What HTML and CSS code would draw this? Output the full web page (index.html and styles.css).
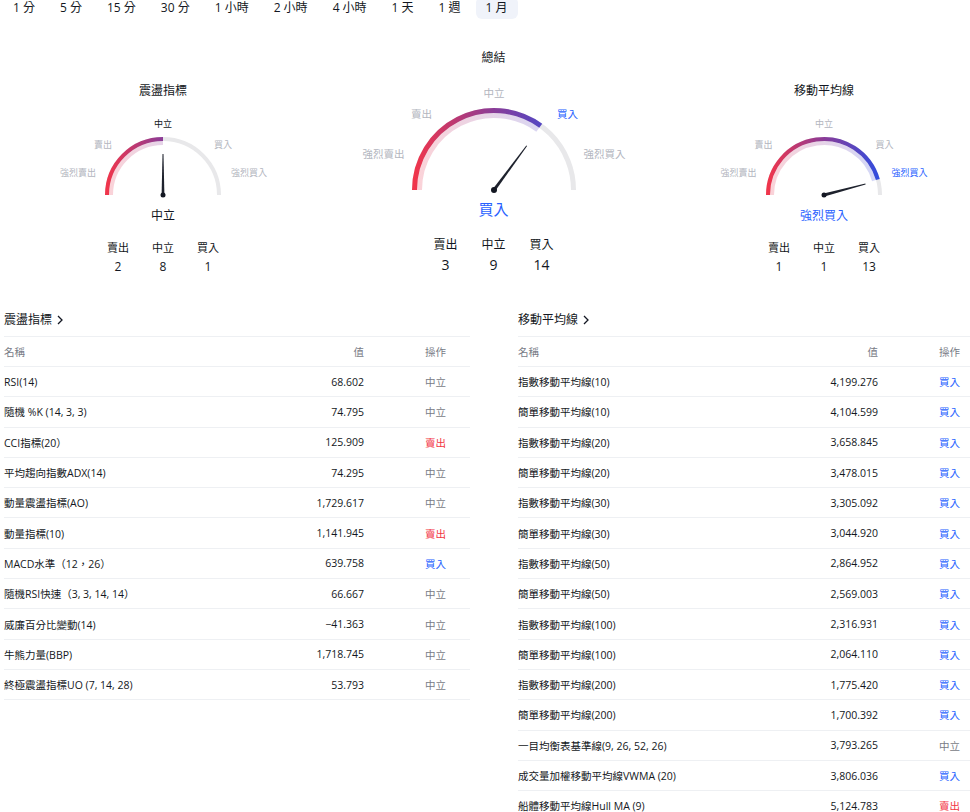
FILE: index.html
```html
<!DOCTYPE html>
<html lang="zh-Hant">
<head>
<meta charset="utf-8">
<title>技術分析</title>
<link rel="stylesheet" href="styles.css">
</head>
<body>
<div class="tabs">
  <button class="tab">1 分</button>
  <button class="tab">5 分</button>
  <button class="tab">15 分</button>
  <button class="tab">30 分</button>
  <button class="tab">1 小時</button>
  <button class="tab">2 小時</button>
  <button class="tab">4 小時</button>
  <button class="tab">1 天</button>
  <button class="tab">1 週</button>
  <button class="tab active">1 月</button>
</div>

<div class="gauges">
  <div class="gauge">
    <div class="g-title">震盪指標</div>
    <svg class="dial" width="326" height="100" viewBox="0 0 326 100">
      <defs>
        <linearGradient id="gl" gradientUnits="userSpaceOnUse" x1="107" y1="0" x2="219" y2="0">
          <stop offset="0" stop-color="#f0354b"/>
          <stop offset="0.5" stop-color="#8a3c98"/>
          <stop offset="1" stop-color="#2f4de0"/>
        </linearGradient>
      </defs>
      <text class="sl on" x="163" y="24">中立</text>
      <text class="sl" x="103" y="45">賣出</text>
      <text class="sl" x="78" y="73">強烈賣出</text>
      <text class="sl" x="223" y="45">買入</text>
      <text class="sl" x="249" y="73">強烈買入</text>
      <path d="M107 96 A56 56 0 0 1 219 96" class="track" stroke-width="4"/>
      <path d="M107 96 A56 56 0 0 1 163 40" fill="none" stroke="url(#gl)" stroke-width="4"/>
      <path d="M111 96 A52 52 0 0 1 163 44" fill="none" stroke="url(#gl)" stroke-width="4" opacity="0.22"/>
      <polygon class="needle" points="161.6,96 164.4,96 163.5,55 162.5,55"/>
      <circle class="pivot" cx="163" cy="96" r="2.5"/>
    </svg>
    <div class="g-value">中立</div>
    <div class="counts">
      <div class="cnt"><span class="cl">賣出</span><span class="cn">2</span></div>
      <div class="cnt"><span class="cl">中立</span><span class="cn">8</span></div>
      <div class="cnt"><span class="cl">買入</span><span class="cn">1</span></div>
    </div>
  </div>

  <div class="gauge main">
    <div class="g-title">總結</div>
    <svg class="dial" width="326" height="128" viewBox="0 0 326 128">
      <defs>
        <linearGradient id="gm" gradientUnits="userSpaceOnUse" x1="83.5" y1="0" x2="242.5" y2="0">
          <stop offset="0" stop-color="#f0354b"/>
          <stop offset="0.5" stop-color="#8a3c98"/>
          <stop offset="1" stop-color="#2f4de0"/>
        </linearGradient>
      </defs>
      <text class="ml" x="163" y="26">中立</text>
      <text class="ml" x="90.5" y="47">賣出</text>
      <text class="ml" x="52.5" y="87">強烈賣出</text>
      <text class="ml buy" x="236.5" y="47">買入</text>
      <text class="ml" x="273.5" y="87">強烈買入</text>
      <path d="M83.5 124 A79.5 79.5 0 0 1 242.5 124" class="track" stroke-width="5"/>
      <path d="M83.5 124 A79.5 79.5 0 0 1 209.73 59.68" fill="none" stroke="url(#gm)" stroke-width="5"/>
      <path d="M88.5 124 A74.5 74.5 0 0 1 206.79 63.73" fill="none" stroke="url(#gm)" stroke-width="5" opacity="0.22"/>
      <polygon class="needle" points="161.8,123.1 164.2,124.9 196.1,80.1 195.3,79.5"/>
      <circle class="pivot" cx="163" cy="124" r="3"/>
    </svg>
    <div class="g-value buy">買入</div>
    <div class="counts">
      <div class="cnt"><span class="cl">賣出</span><span class="cn">3</span></div>
      <div class="cnt"><span class="cl">中立</span><span class="cn">9</span></div>
      <div class="cnt"><span class="cl">買入</span><span class="cn">14</span></div>
    </div>
  </div>

  <div class="gauge">
    <div class="g-title">移動平均線</div>
    <svg class="dial" width="326" height="100" viewBox="0 0 326 100">
      <defs>
        <linearGradient id="gr" gradientUnits="userSpaceOnUse" x1="107" y1="0" x2="219" y2="0">
          <stop offset="0" stop-color="#f0354b"/>
          <stop offset="0.5" stop-color="#8a3c98"/>
          <stop offset="1" stop-color="#2f4de0"/>
        </linearGradient>
      </defs>
      <text class="sl" x="163" y="24">中立</text>
      <text class="sl" x="102.5" y="45">賣出</text>
      <text class="sl" x="77.5" y="73">強烈賣出</text>
      <text class="sl" x="223.5" y="45">買入</text>
      <text class="sl buy" x="248.5" y="73">強烈買入</text>
      <path d="M107 96 A56 56 0 0 1 219 96" class="track" stroke-width="4"/>
      <path d="M107 96 A56 56 0 0 1 216.83 80.57" fill="none" stroke="url(#gr)" stroke-width="4"/>
      <path d="M111 96 A52 52 0 0 1 212.99 81.67" fill="none" stroke="url(#gr)" stroke-width="4" opacity="0.22"/>
      <polygon class="needle" points="162.6,94.6 163.4,97.4 204.6,85.6 204.4,84.4"/>
      <circle class="pivot" cx="163" cy="96" r="2.5"/>
    </svg>
    <div class="g-value buy">強烈買入</div>
    <div class="counts">
      <div class="cnt"><span class="cl">賣出</span><span class="cn">1</span></div>
      <div class="cnt"><span class="cl">中立</span><span class="cn">1</span></div>
      <div class="cnt"><span class="cl">買入</span><span class="cn">13</span></div>
    </div>
  </div>
</div>

<div class="tables">
  <section class="tbl">
    <h2 class="tbl-title">震盪指標 <svg class="chev" width="6" height="10" viewBox="0 0 6 10"><path d="M1 1 L5 5 L1 9" fill="none" stroke="#131722" stroke-width="1.3"/></svg></h2>
    <div class="row head"><span class="c-name">名稱</span><span class="c-val">值</span><span class="c-act">操作</span></div>
    <div class="row"><span class="c-name">RSI(14)</span><span class="c-val">68.602</span><span class="c-act neu">中立</span></div>
    <div class="row"><span class="c-name">隨機 %K (14, 3, 3)</span><span class="c-val">74.795</span><span class="c-act neu">中立</span></div>
    <div class="row"><span class="c-name">CCI指標(20）</span><span class="c-val">125.909</span><span class="c-act sell">賣出</span></div>
    <div class="row"><span class="c-name">平均趨向指數ADX(14)</span><span class="c-val">74.295</span><span class="c-act neu">中立</span></div>
    <div class="row"><span class="c-name">動量震盪指標(AO)</span><span class="c-val">1,729.617</span><span class="c-act neu">中立</span></div>
    <div class="row"><span class="c-name">動量指標(10)</span><span class="c-val">1,141.945</span><span class="c-act sell">賣出</span></div>
    <div class="row"><span class="c-name">MACD水準（12，26）</span><span class="c-val">639.758</span><span class="c-act buy">買入</span></div>
    <div class="row"><span class="c-name">隨機RSI快速（3, 3, 14, 14）</span><span class="c-val">66.667</span><span class="c-act neu">中立</span></div>
    <div class="row"><span class="c-name">威廉百分比變動(14)</span><span class="c-val">−41.363</span><span class="c-act neu">中立</span></div>
    <div class="row"><span class="c-name">牛熊力量(BBP)</span><span class="c-val">1,718.745</span><span class="c-act neu">中立</span></div>
    <div class="row"><span class="c-name">終極震盪指標UO (7, 14, 28)</span><span class="c-val">53.793</span><span class="c-act neu">中立</span></div>
  </section>

  <section class="tbl">
    <h2 class="tbl-title">移動平均線 <svg class="chev" width="6" height="10" viewBox="0 0 6 10"><path d="M1 1 L5 5 L1 9" fill="none" stroke="#131722" stroke-width="1.3"/></svg></h2>
    <div class="row head"><span class="c-name">名稱</span><span class="c-val">值</span><span class="c-act">操作</span></div>
    <div class="row"><span class="c-name">指數移動平均線(10)</span><span class="c-val">4,199.276</span><span class="c-act buy">買入</span></div>
    <div class="row"><span class="c-name">簡單移動平均線(10)</span><span class="c-val">4,104.599</span><span class="c-act buy">買入</span></div>
    <div class="row"><span class="c-name">指數移動平均線(20)</span><span class="c-val">3,658.845</span><span class="c-act buy">買入</span></div>
    <div class="row"><span class="c-name">簡單移動平均線(20)</span><span class="c-val">3,478.015</span><span class="c-act buy">買入</span></div>
    <div class="row"><span class="c-name">指數移動平均線(30)</span><span class="c-val">3,305.092</span><span class="c-act buy">買入</span></div>
    <div class="row"><span class="c-name">簡單移動平均線(30)</span><span class="c-val">3,044.920</span><span class="c-act buy">買入</span></div>
    <div class="row"><span class="c-name">指數移動平均線(50)</span><span class="c-val">2,864.952</span><span class="c-act buy">買入</span></div>
    <div class="row"><span class="c-name">簡單移動平均線(50)</span><span class="c-val">2,569.003</span><span class="c-act buy">買入</span></div>
    <div class="row"><span class="c-name">指數移動平均線(100)</span><span class="c-val">2,316.931</span><span class="c-act buy">買入</span></div>
    <div class="row"><span class="c-name">簡單移動平均線(100)</span><span class="c-val">2,064.110</span><span class="c-act buy">買入</span></div>
    <div class="row"><span class="c-name">指數移動平均線(200)</span><span class="c-val">1,775.420</span><span class="c-act buy">買入</span></div>
    <div class="row"><span class="c-name">簡單移動平均線(200)</span><span class="c-val">1,700.392</span><span class="c-act buy">買入</span></div>
    <div class="row"><span class="c-name">一目均衡表基準線(9, 26, 52, 26)</span><span class="c-val">3,793.265</span><span class="c-act neu">中立</span></div>
    <div class="row"><span class="c-name">成交量加權移動平均線VWMA (20)</span><span class="c-val">3,806.036</span><span class="c-act buy">買入</span></div>
    <div class="row"><span class="c-name">船體移動平均線Hull MA (9)</span><span class="c-val">5,124.783</span><span class="c-act sell">賣出</span></div>
  </section>
</div>
</body>
</html>
```

FILE: styles.css
```css
html, body {
  margin: 0;
  padding: 0;
  overflow: hidden;
  background: #ffffff;
}

body {
  width: 988px;
  font-family: "Open Sans", "Noto Sans CJK TC", sans-serif;
  color: #131722;
}

/* interval tabs */
.tabs {
  display: flex;
  gap: 5px;
  padding-left: 3px;
  margin-top: -3px;
}

.tab {
  font-family: inherit;
  font-size: 12px;
  height: 22px;
  line-height: 22px;
  padding: 0 10px;
  border: 0;
  border-radius: 6px;
  background: transparent;
  color: #131722;
}

.tab.active {
  background: #f0f3fa;
}

/* gauges */
.gauges {
  display: flex;
  justify-content: space-between;
  width: 987px;
}

.gauge {
  width: 326px;
  display: flex;
  flex-direction: column;
  align-items: center;
  padding-top: 64px;
}

.gauge.main {
  padding-top: 31px;
}

.g-title {
  font-size: 12px;
  line-height: 16px;
}

.dial {
  display: block;
}

.dial text {
  font-family: "Noto Sans CJK TC", sans-serif;
  text-anchor: middle;
  dominant-baseline: central;
}

.sl {
  font-size: 9px;
  fill: #b2b5be;
}

.ml {
  font-size: 10.5px;
  fill: #b2b5be;
}

.sl.on {
  fill: #131722;
}

.sl.buy, .ml.buy {
  fill: #2962ff;
}

.track {
  fill: none;
  stroke: #e8e8ea;
}

.needle {
  fill: #1e222d;
}

.pivot {
  fill: #131722;
}

.g-value {
  font-size: 12px;
  line-height: 16px;
  margin-top: 9px;
}

.g-value.buy {
  color: #2962ff;
}

.main .g-value {
  font-size: 15px;
  line-height: 20px;
  margin-top: 5px;
}

.counts {
  display: flex;
  margin-top: 16px;
}

.cnt {
  width: 45px;
  display: flex;
  flex-direction: column;
  align-items: center;
}

.cl {
  font-size: 11px;
  line-height: 16px;
}

.cn {
  font-size: 12px;
  line-height: 16px;
  margin-top: 3px;
}

.main .counts {
  margin-top: 18px;
}

.main .cnt {
  width: 48px;
}

.main .cl {
  font-size: 12px;
}

.main .cn {
  font-size: 14px;
  line-height: 18px;
}

/* tables */
.tables {
  display: flex;
  gap: 48px;
  padding-left: 4px;
  margin-top: 35px;
}

.tbl {
  width: 466px;
  flex: none;
}

.tbl-title {
  margin: 0;
  font-size: 12px;
  font-weight: 400;
  line-height: 20px;
  padding-bottom: 6px;
  border-bottom: 1px solid #eef0f3;
  display: flex;
  align-items: center;
  gap: 5px;
}

.chev {
  display: block;
}

.row {
  display: grid;
  grid-template-columns: 1fr 120px 82px;
  padding-right: 24px;
  height: 29.3px;
  align-items: center;
  border-bottom: 1px solid #eef0f3;
  font-size: 10.5px;
  color: #131722;
}

.row.head {
  height: 29px;
  color: #787b86;
}

.c-val, .c-act {
  text-align: right;
}

.neu { color: #787b86; }
.buy { color: #2962ff; }
.sell { color: #f23645; }
```
